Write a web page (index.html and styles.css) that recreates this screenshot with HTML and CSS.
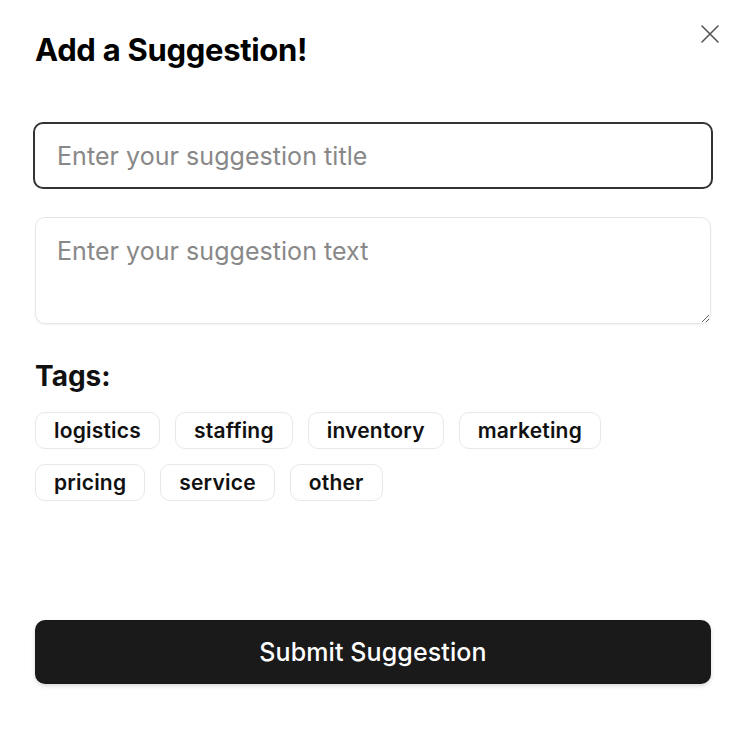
FILE: index.html
```html
<!DOCTYPE html>
<html lang="en">
<head>
<meta charset="utf-8">
<title>Add a Suggestion</title>
<link rel="stylesheet" href="styles.css">
</head>
<body>
<div class="modal">
  <button class="close" aria-label="Close">
    <svg width="20" height="20" viewBox="0 0 20 20" fill="none" stroke="#555" stroke-width="1.6" stroke-linecap="round"><path d="M2 2L18 18M18 2L2 18"/></svg>
  </button>
  <h1 class="title">Add a Suggestion!</h1>
  <input class="field title-input" type="text" placeholder="Enter your suggestion title">
  <textarea class="field text-input" placeholder="Enter your suggestion text"></textarea>
  <h2 class="tags-label">Tags:</h2>
  <div class="tags">
    <button class="tag">logistics</button>
    <button class="tag">staffing</button>
    <button class="tag">inventory</button>
    <button class="tag">marketing</button>
    <button class="tag">pricing</button>
    <button class="tag">service</button>
    <button class="tag">other</button>
  </div>
  <button class="submit">Submit Suggestion</button>
</div>
</body>
</html>
```
FILE: styles.css
```css
* { box-sizing: border-box; }
html, body { margin: 0; padding: 0; background: #fff; }
body { font-family: Inter, "Noto Sans", sans-serif; color: #111; }
.modal {
  position: relative;
  width: 746px;
  height: 746px;
  padding: 30px 35px 0 35px;
  display: flex;
  flex-direction: column;
}
.close {
  position: absolute;
  top: 24px;
  right: 26px;
  width: 20px;
  height: 20px;
  padding: 0;
  border: 0;
  background: none;
  display: flex;
}
.title {
  margin: 0;
  font-size: 31px;
  line-height: 40px;
  font-weight: 700;
  letter-spacing: -0.3px;
  color: #000;
}
.field {
  font-family: Inter, "Noto Sans", sans-serif;
  font-size: 25px;
  letter-spacing: 0.05px;
  color: #111;
  background: #fff;
  outline: none;
}
.field::placeholder { color: #888; }
.title-input {
  margin: 52px -2px 0 -2px;
  height: 67px;
  border: 2px solid #333;
  border-radius: 10px;
  padding: 0 22px;
}
.text-input {
  margin-top: 28px;
  height: 107px;
  border: 1px solid #e6e6e6;
  border-radius: 10px;
  padding: 15px 21px;
  line-height: 1.5;
  resize: vertical;
  box-shadow: 0 1px 2px rgba(0,0,0,0.06);
}
.tags-label {
  margin: 34px 0 0 0;
  font-size: 28px;
  line-height: 36px;
  font-weight: 700;
  color: #111;
}
.tags {
  margin-top: 18px;
  display: flex;
  flex-wrap: wrap;
  gap: 15px;
  width: 600px;
}
.tag {
  height: 37px;
  padding: 0 18px;
  border: 1px solid #e8e8e8;
  border-radius: 10px;
  background: #fff;
  font-family: Inter, "Noto Sans", sans-serif;
  font-size: 21px;
  font-weight: 600;
  letter-spacing: 0.2px;
  color: #111;
}
.submit {
  margin-top: 119px;
  height: 64px;
  border: 0;
  border-radius: 10px;
  background: #1a1a1a;
  color: #fff;
  font-family: Inter, "Noto Sans", sans-serif;
  font-size: 25px;
  font-weight: 500;
  letter-spacing: 0.1px;
  box-shadow: 0 2px 4px rgba(0,0,0,0.15);
}
```
